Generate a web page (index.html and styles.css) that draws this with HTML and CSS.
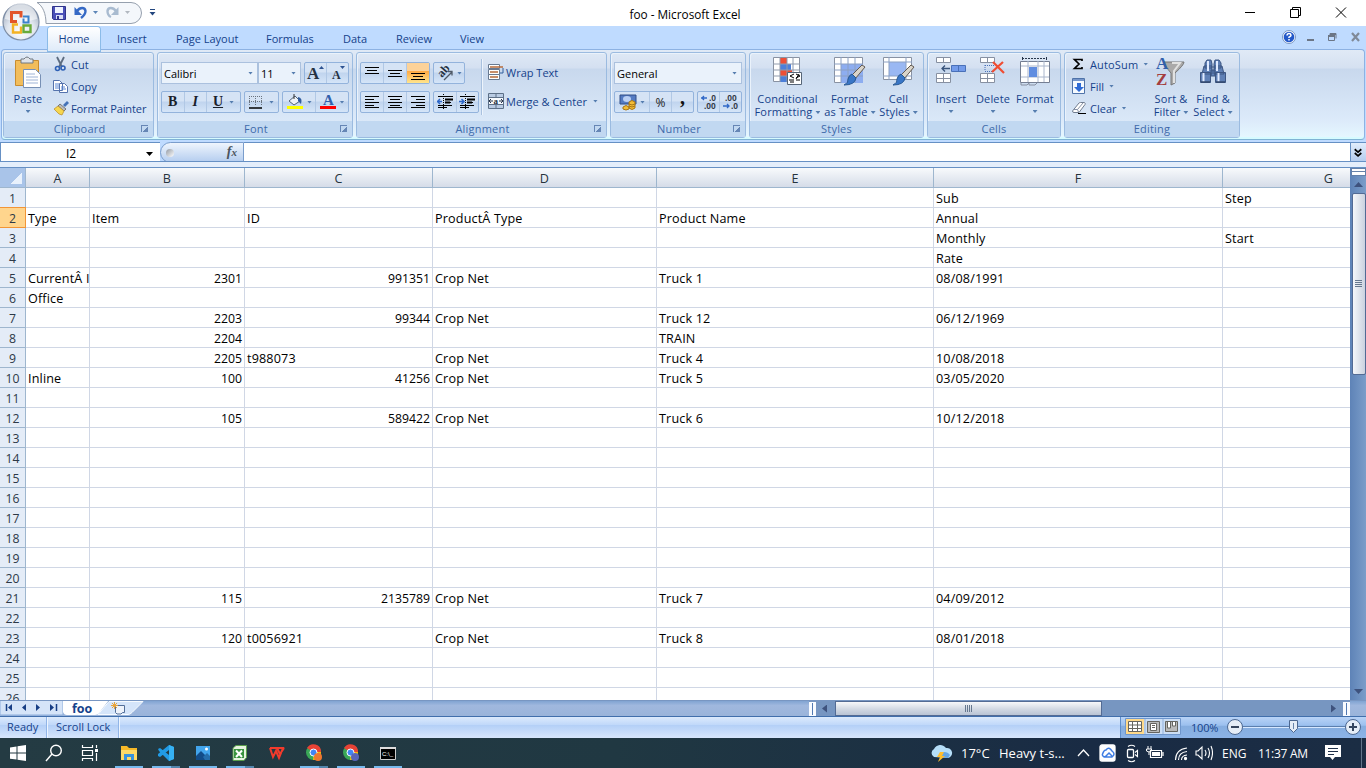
FILE: index.html
```html
<!DOCTYPE html>
<html lang="en">
<head>
<meta charset="utf-8">
<title>foo - Microsoft Excel</title>
<link rel="stylesheet" href="styles.css">
</head>
<body>
<div class="app">
  <header class="titlebar">
    <div class="quick">
      <svg width="160" height="26" viewBox="0 0 160 26">
        <path d="M37 2.500H131a10.500 10.500 0 0 1 0 21H46C46 14 43 6 37 2.500Z" fill="#f4f7fb" stroke="#96a0ae"/>
        <path d="M52.500 6.500h13v13h-12l-1-1z" fill="#4a50b8" stroke="#30348c"/><path d="M55 7h8v6h-8z" fill="#eef3ff"/><path d="M56 15h7v4h-7z" fill="#d9def5"/><path d="M57 16h2v3h-2z" fill="#30348c"/>
        <path d="M77 11c3-4 8-4 8.500 0 0 3-2 5-4.500 7" fill="none" stroke="#3569c5" stroke-width="2.400"/><path d="M74.500 7v8h7.500z" fill="#3569c5"/>
        <path d="M93 11h5l-2.500 3z" fill="#5d86b8"/><path d="M116 11c-3-4-8-4-8.500 0 0 3 1 5 3.500 6" fill="none" stroke="#a9bbd0" stroke-width="2.400"/><path d="M118.500 7v8h-7.500z" fill="#a9bbd0"/><path d="M125 11h5l-2.500 3z" fill="#b2b8c0"/>
        <path d="M150 9.500h5" stroke="#24477f"/><path d="M149.500 12h6l-3 3.500z" fill="#24477f"/>
      </svg>
    </div>
    <div class="title">foo - Microsoft Excel</div>
    <svg class="winctl" width="120" height="26" viewBox="0 0 120 26" fill="none" stroke="#000"><path d="M0 12.500h10M45.500 9.500h8v8h-8zM47.500 9.500v-2h8v8h-2M91 7.500l10 10M101 7.500l-10 10"/></svg>
    <svg class="orb" width="40" height="40" viewBox="0 0 40 40">
      <defs><radialGradient id="orb" cx=".5" cy=".75" r=".65"><stop offset="0" stop-color="#fff"/><stop offset=".6" stop-color="#dfe5ee"/><stop offset="1" stop-color="#aab5c6"/></radialGradient></defs>
      <circle cx="20" cy="20" r="18" fill="url(#orb)" stroke="#7d8da5" stroke-width="1.200"/><path d="M4 17a16 16 0 0 1 32 0q-16 5-32 0" fill="#fff" opacity=".55"/>
      <g fill="none" stroke-width="3"><path d="M16 19.500h-5.500V10.500h9.500v5" stroke="#e2542a"/><path d="M22 14.500h5.500v6h-5v-4" stroke="#3b82cc" stroke-width="2"/><path d="M17 22.500h-5v8h8v-6" stroke="#f4b223" stroke-width="2.400"/><path d="M22.500 23.500h7v6.500h-7z" stroke="#68ab3a" stroke-width="2.400"/></g>
    </svg>
  </header>

  <nav class="tabs">
    <span class="tab on">Home</span><span class="tab t2">Insert</span><span class="tab t3">Page Layout</span><span class="tab t4">Formulas</span><span class="tab t5">Data</span><span class="tab t6">Review</span><span class="tab t7">View</span>
    <svg class="docctl" width="84" height="20" viewBox="0 0 84 20"><circle cx="7" cy="9" r="6.500" fill="#fff" stroke="#7a97c2"/><circle cx="7" cy="9" r="5.300" fill="#2459c9"/><path d="M5 7.500q.2-2 2-2t2 1.700q0 1-2 2V10M7 11v1.500" fill="none" stroke="#fff" stroke-width="1.500"/><path d="M25 12h7" stroke="#6c7686" stroke-width="2"/><path d="M46.500 8.500h6v4h-6zM48 7V5.500h6v5" fill="none" stroke="#6c7686"/><path d="M46 8h7M48 6h6" stroke="#6c7686" stroke-width="2"/><path d="M70 5l7 8M77 5l-7 8" stroke="#808a98" stroke-width="2.200"/></svg>
  </nav>

  <section class="ribbon">
    <div class="group clip">
      <div class="gbody">
        <div class="big paste"><svg width="30" height="32" viewBox="0 0 30 32"><path d="M2.500 4.500h23v25h-23z" fill="#f2bd5b" stroke="#c98d30"/><path d="M8 3h3q3-4 6 0h3v4H8z" fill="#dfe3e8" stroke="#707880"/><path d="M10.500 13.500h12l5 5v13h-17z" fill="#fff" stroke="#7790b5"/><path d="M13 18h9M13 21h12M13 24h12M13 27h12" stroke="#9fb4d6"/></svg><span>Paste</span><i class="dn"></i></div>
        <div class="stack">
          <div class="small"><svg width="16" height="16" viewBox="0 0 16 16" fill="none"><path d="M4 1l5 10M11 1L6 11" stroke="#5c6c80" stroke-width="1.800"/><circle cx="4.500" cy="12.500" r="2" stroke="#2e60b5" stroke-width="1.600"/><circle cx="10" cy="12" r="2" stroke="#2e60b5" stroke-width="1.600"/></svg><span>Cut</span></div>
          <div class="small"><svg width="16" height="16" viewBox="0 0 16 16"><path d="M.5 2.500h6l3 3v7h-9zM6.500 5.500h5l3 3v6h-8z" fill="#fff" stroke="#5573ad"/><path d="M2 6h4M2 8h4M8 9h4M8 11h5M2 10h4" stroke="#5b87d4"/></svg><span>Copy</span></div>
          <div class="small"><svg width="16" height="16" viewBox="0 0 16 16"><path d="M10 5l4-4 2 2-4 4z" fill="#4473b8"/><path d="M7 4l6 5-2 2-6-5z" fill="#bbb" stroke="#555" stroke-width=".7"/><path d="M5 6l6 5-2 4-3-1-5-5z" fill="#f6d64f" stroke="#b88a25" stroke-width=".7"/></svg><span class="fp">Format Painter</span></div>
        </div>
      </div>
      <div class="glabel">Clipboard<i class="launch"></i></div>
    </div>

    <div class="group font">
      <div class="gbody rows">
        <div class="line">
          <div class="combo w97">Calibri<i class="dn"></i></div><div class="combo w43">11<i class="dn"></i></div>
          <div class="btns ml3 w45"><b><svg width="20" height="20" viewBox="0 0 20 20"><text x="1" y="16" class="ser" font-size="17">A</text><path d="M13 6h5l-2.500-3z" fill="#2d5291"/></svg></b><b><svg width="20" height="20" viewBox="0 0 20 20"><text x="4" y="16" class="ser" font-size="12">A</text><path d="M12 3h5l-2.500 3z" fill="#2d5291"/></svg></b></div>
        </div>
        <div class="line">
          <div class="btns w80"><b class="ser bt">B</b><b class="ser bt it">I</b><b class="w34"><u class="ser bt">U</u><i class="dn wide"></i></b></div>
          <div class="btns w35 ml4"><b><svg width="14" height="16" viewBox="0 0 14 16"><path d="M.5 2v10M6.500 2v10M12.500 2v10M0 2.500h13M0 7.500h13" fill="none" stroke="#69737f" stroke-dasharray="1 1"/><path d="M0 14h13" stroke="#000" stroke-width="1.500"/></svg><i class="dn wide"></i></b></div>
          <div class="btns w67 ml3"><b><svg width="18" height="18" viewBox="0 0 18 18"><path d="M3 8l6-5 5 5-6 4z" fill="#eef2f7" stroke="#536477"/><path d="M8 1v5" stroke="#333"/><path d="M12 4q5 1 3 7l-3-3z" fill="#315d9e"/><path d="M1 13h16v3H1z" fill="#ff0"/></svg><i class="dn"></i></b><b><svg width="17" height="18" viewBox="0 0 17 18"><text x="3" y="12" class="ser blue" font-size="15">A</text><path d="M0 13h16v3H0z" fill="#f00"/></svg><i class="dn"></i></b></div>
        </div>
      </div>
      <div class="glabel">Font<i class="launch"></i></div>
    </div>

    <div class="group align">
      <div class="gbody">
        <div class="rows sep">
          <div class="line"><div class="btns w69"><b><svg class="ln" viewBox="0 0 16 16"><path d="M1 2.500h14M3 5.500h10M1 8.500h14"/></svg></b><b><svg class="ln" viewBox="0 0 16 16"><path d="M1 5.500h14M3 8.500h10M1 11.500h14"/></svg></b><b class="hot"><svg class="ln" viewBox="0 0 16 16"><path d="M1 8.500h14M3 11.500h10M1 14.500h14"/></svg></b></div>
          <div class="btns w32 ml3"><b><svg width="18" height="18" viewBox="0 0 18 18"><text x="0" y="0" class="ser" font-size="12" transform="translate(6 14) rotate(-48)">ab</text><path d="M8 16l8-8M12 7.500h4v4" fill="none" stroke="#4e5967" stroke-width="1.300"/></svg><i class="dn"></i></b></div></div>
          <div class="line"><div class="btns w69"><b><svg class="ln" viewBox="0 0 16 16"><path d="M1 2.500h14M1 5.500h9M1 8.500h14M1 11.500h9M1 13.500h14"/></svg></b><b><svg class="ln" viewBox="0 0 16 16"><path d="M1 2.500h14M3 5.500h10M1 8.500h14M3 11.500h10M1 13.500h14"/></svg></b><b><svg class="ln" viewBox="0 0 16 16"><path d="M1 2.500h14M6 5.500h9M1 8.500h14M6 11.500h9M1 13.500h14"/></svg></b></div>
          <div class="btns w46 ml3"><b><svg class="ln" viewBox="0 0 16 16"><path d="M1 2.500h15M8 5.500h8M8 8.500h6M1 11.500h14M1 13.500h9"/><path d="M6.500 0v16" stroke-dasharray="1 1"/><path d="M8 5.500h8M8 8.500h5" stroke-width="2"/><path class="bl" d="M0 7.500h5M3 5L.5 7.500 3 10"/></svg></b><b><svg class="ln" viewBox="0 0 16 16"><path d="M1 2.500h15M8 5.500h8M8 8.500h6M1 11.500h14M1 13.500h9"/><path d="M6.500 0v16" stroke-dasharray="1 1"/><path d="M8 5.500h8M8 8.500h5" stroke-width="2"/><path class="bl" d="M0 7.500h5M2.500 5L5 7.500 2.500 10"/></svg></b></div></div>
        </div>
        <div class="stack wrap">
          <div class="small"><svg width="16" height="16" viewBox="0 0 16 16"><path d="M.5.500h11v4H.5zM.5 5.500h11v5H.5zM.5 10.500h11v5H.5z" fill="#fff" stroke="#687a91"/><path d="M2 3h13M2 8h8M2 13h8" stroke="#b66b3b" stroke-width="1.500"/><path d="M15 4v5h-3" stroke="#315f9e" fill="none"/></svg><span>Wrap Text</span></div>
          <div class="small"><svg width="16" height="16" viewBox="0 0 16 16"><path d="M.5.500h15v15H.5z" fill="#f8fbff" stroke="#5d7088"/><path d="M1 1h14v3H1zM1 12h14v3H1z" fill="#b9cbe3"/><path d="M.5 4.500h15M.5 11.500h15M8 0v4M8 12v4" stroke="#5d7088"/><path d="M1 8h4M11 8h4M3 6L1 8l2 2M13 6l2 2-2 2" fill="none" stroke="#29354a"/><text x="5.500" y="10.500" class="ser" font-size="9">a</text></svg><span class="mc">Merge &amp; Center</span><i class="dn"></i></div>
        </div>
      </div>
      <div class="glabel">Alignment<i class="launch"></i></div>
    </div>

    <div class="group number">
      <div class="gbody rows">
        <div class="line"><div class="combo w128">General<i class="dn"></i></div></div>
        <div class="line"><div class="btns w80"><b class="w34"><svg width="18" height="18" viewBox="0 0 18 18"><path d="M1 2h16v9H1z" fill="#547bc2" stroke="#304f88"/><ellipse cx="8" cy="6" rx="4" ry="3" fill="#b9cff4"/><path d="M10 9q3-3 6 0v6q-3 3-6 0zM4 14q3-3 6 0v2q-3 2-6 0z" fill="#f3bd35" stroke="#a97615"/><path d="M10 11q3 2 6 0m-6 2q3 2 6 0" fill="none" stroke="#a97615"/></svg><i class="dn"></i></b><b class="pct">%</b><b class="ser comma">,</b></div>
        <div class="btns w45 ml3"><b><svg class="dec" viewBox="0 0 18 18"><text x="9" y="8">.0</text><text x="4" y="16">.00</text><path d="M1 5h6M4 3L2 5l2 2"/></svg></b><b><svg class="dec" viewBox="0 0 18 18"><text x="3" y="8">.00</text><text x="9" y="16">.0</text><path d="M1 13h6M5 11l2 2-2 2"/></svg></b></div></div>
      </div>
      <div class="glabel">Number<i class="launch"></i></div>
    </div>

    <div class="group styles">
      <div class="gbody">
        <div class="big b75"><svg width="30" height="30" viewBox="0 0 30 30"><path d="M.5.500h26v24H.5z" fill="#fff" stroke="#8992a2"/><path d="M7 1h7v6H7zM7 13h12v6H7z" fill="#ee4f36"/><path d="M7 7h11v6H7zM7 19h7v6H7z" fill="#4c7fd9"/><path d="M7 0v25M14 0v25M20 0v25M0 7h27M0 13h27M0 19h27" stroke="#909bad"/><path d="M14.500 15.500h14v12h-14z" fill="#fff" stroke="#566577"/><path d="M21 17l-4 2 4 2M16 23h5M23 17l4 2-4 2M23 23h4M17 25h4M26 17l-3 5" fill="none" stroke="#000"/></svg><span>Conditional</span><span>Formatting<i class="dn"></i></span></div>
        <div class="big b50"><svg width="32" height="30" viewBox="0 0 32 30"><path d="M.5.500h28v25H.5z" fill="#fff" stroke="#8992a2"/><path d="M7 7h22v19H7z" fill="#8dadf0"/><path d="M7 0v26M14 0v26M21 0v26M0 7h29M0 13h29M0 19h29" stroke="#8ba0c3"/><path d="M28 8l3 2-10 12-4-3z" fill="#d9d4ca" stroke="#625950"/><path d="M18 17l4 4q-1 7-12 7 5-2 4-6 1-4 4-5" fill="#3976c7" stroke="#265893"/></svg><span>Format</span><span>as Table<i class="dn"></i></span></div>
        <div class="big b46"><svg width="32" height="30" viewBox="0 0 32 30"><path d="M.5.500h28v22H.5z" fill="#fff" stroke="#8992a2"/><path d="M6 5h17v14H6z" fill="#9ab8f3"/><path d="M6 0v23M23 0v23M0 5h29M0 19h29" stroke="#8ba0c3"/><path d="M28 8l3 2-10 12-4-3z" fill="#d9d4ca" stroke="#625950"/><path d="M18 17l4 4q-1 7-12 7 5-2 4-6 1-4 4-5" fill="#3976c7" stroke="#265893"/></svg><span>Cell</span><span>Styles<i class="dn"></i></span></div>
      </div>
      <div class="glabel nol">Styles</div>
    </div>

    <div class="group cells">
      <div class="gbody">
        <div class="big b42"><svg width="30" height="30" viewBox="0 0 30 30"><path d="M.5.500h14v5H.5zM7.500 0v6M.5 16.500h14v9H.5zM7.500 16v10M0 21.500h15" fill="#fff" stroke="#8790a1"/><path d="M15.500 8.500h14v6h-14z" fill="#739bea" stroke="#4970b8"/><path d="M22.500 9v5" stroke="#4970b8"/><path d="M6 11.500h8M9 8.500l-3 3 3 3" fill="none" stroke="#39547b" stroke-width="1.300"/></svg><span>Insert</span><i class="dn"></i></div>
        <div class="big b42"><svg width="26" height="30" viewBox="0 0 26 30"><path d="M.5.500h14v5H.5zM7.500 0v6M.5 16.500h14v9H.5zM7.500 16v10M0 21.500h15" fill="#fff" stroke="#8790a1"/><path d="M5 8.500h10M5 14.500h10M5 8v6" stroke="#4970b8" stroke-dasharray="1 1"/><path d="M13 5l11 11M23 5L12 15" stroke="#f04d32" stroke-width="2.200"/></svg><span>Delete</span><i class="dn"></i></div>
        <div class="big b42"><svg width="32" height="30" viewBox="0 0 32 30"><path d="M3 1.500h24" stroke="#27364a" stroke-dasharray="2 1"/><path d="M3.500 0v3M27.500 0v3" stroke="#27364a"/><path d="M1.500 4.500h29v21h-29z" fill="#fff" stroke="#747e92"/><path d="M9 4v21M19 4v21M25 4v21M2 9h28M2 20h28" stroke="#aab6cc"/><path d="M10 10h8v10h-8z" fill="#608de0"/><path d="M2 26v2h6l2-2v2h6l2-2" fill="none" stroke="#8790a1"/></svg><span>Format</span><i class="dn"></i></div>
      </div>
      <div class="glabel nol">Cells</div>
    </div>

    <div class="group editing">
      <div class="gbody">
        <div class="stack">
          <div class="small"><svg width="16" height="16" viewBox="0 0 16 16"><path d="M11 5V3.500H3.500L8 8l-4.500 4.500H11V11" fill="none" stroke="#000" stroke-width="1.700"/></svg><span class="as">AutoSum</span><i class="dn"></i></div>
          <div class="small"><svg width="16" height="16" viewBox="0 0 16 16"><path d="M1.500.500h12v15h-12z" fill="#f7fbff" stroke="#4f73a9"/><path d="M2 1h11v2H2z" fill="#7696ca"/><path d="M6 5h4v4h3l-5 5-5-5h3z" fill="#2f6bd5"/></svg><span>Fill</span><i class="dn"></i></div>
          <div class="small"><svg width="16" height="16" viewBox="0 0 16 16"><path d="M1.500 11L8 3q.5-.500 1.500-.500h4q1 .500.500 2L8 12.500H3q-1.500 0-1.500-1.500z" fill="#fff" stroke="#717d90"/><path d="M2 9.500h4.500l1 2.500M6.500 9.500L12 3" fill="none" stroke="#8894a8"/><path d="M7 13.500h8" stroke="#000"/></svg><span>Clear</span><i class="dn"></i></div>
        </div>
        <div class="big b42"><svg width="32" height="30" viewBox="0 0 32 30"><path d="M9 5h20q0 3-9 11v10l-4 2V16Q9 8 9 5z" fill="#aaa9a9" stroke="#777"/><path d="M17 6h8l-6 8v12" fill="none" stroke="#e1e1e1" stroke-width="2"/><text x="1" y="12" class="ser blue" font-size="17" aria-label="A">A</text><text x="1" y="28" class="ser red" font-size="17">Z</text></svg><span>Sort &amp;</span><span>Filter<i class="dn"></i></span></div>
        <div class="big b42"><svg width="28" height="30" viewBox="0 0 28 30"><g fill="#5f80b6" stroke="#3d5683"><path d="M8 3h4l1 4v4H6V6zM16 3h4l2 3v5h-7V7zM5 9h8v8H3zM15 9h8l2 8H15zM1.500 15.500h10v10h-10zM16.500 15.500h10v10h-10zM12 13h4v6h-4z"/></g><path d="M4.500 16v9M19.500 16v9M9 4v10M18 4v10" stroke="#dfeaff" stroke-width="2"/><path d="M2 25h9M17 25h9" stroke="#33486e" stroke-width="1.500"/></svg><span>Find &amp;</span><span>Select<i class="dn"></i></span></div>
      </div>
      <div class="glabel nol">Editing</div>
    </div>
  </section>

  <div class="formula"><div class="namebox">I2<i></i></div><div class="fx"><em></em><span>f<small>x</small></span></div><div class="entry"></div><svg class="expand" width="16" height="20" viewBox="0 0 16 20"><path d="M4 6l3.500 3L11 6M4 10l3.500 3L11 10" fill="none" stroke="#000" stroke-width="1.800"/></svg></div>

  <main class="work">
    <div class="sheet">
      <div class="row heads"><b></b><span>A</span><span>B</span><span>C</span><span>D</span><span>E</span><span>F</span><span class="gh">G</span></div>
      <div class="row"><b>1</b><span class="cf">Sub</span><span class="cg">Step</span></div>
      <div class="row"><b class="sel">2</b><span class="ca">Type</span><span class="cb">Item</span><span class="cc">ID</span><span class="cd">ProductÂ Type</span><span class="ce">Product Name</span><span class="cf">Annual</span></div>
      <div class="row"><b>3</b><span class="cf">Monthly</span><span class="cg">Start</span></div>
      <div class="row"><b>4</b><span class="cf">Rate</span></div>
      <div class="row"><b>5</b><span class="ca">CurrentÂ I</span><span class="cb n">2301</span><span class="cc n">991351</span><span class="cd">Crop Net</span><span class="ce">Truck 1</span><span class="cf">08/08/1991</span></div>
      <div class="row"><b>6</b><span class="ca">Office</span></div>
      <div class="row"><b>7</b><span class="cb n">2203</span><span class="cc n">99344</span><span class="cd">Crop Net</span><span class="ce">Truck 12</span><span class="cf">06/12/1969</span></div>
      <div class="row"><b>8</b><span class="cb n">2204</span><span class="ce">TRAIN</span></div>
      <div class="row"><b>9</b><span class="cb n">2205</span><span class="cc">t988073</span><span class="cd">Crop Net</span><span class="ce">Truck 4</span><span class="cf">10/08/2018</span></div>
      <div class="row"><b>10</b><span class="ca">Inline</span><span class="cb n">100</span><span class="cc n">41256</span><span class="cd">Crop Net</span><span class="ce">Truck 5</span><span class="cf">03/05/2020</span></div>
      <div class="row"><b>11</b></div>
      <div class="row"><b>12</b><span class="cb n">105</span><span class="cc n">589422</span><span class="cd">Crop Net</span><span class="ce">Truck 6</span><span class="cf">10/12/2018</span></div>
      <div class="row"><b>13</b></div><div class="row"><b>14</b></div><div class="row"><b>15</b></div><div class="row"><b>16</b></div><div class="row"><b>17</b></div><div class="row"><b>18</b></div><div class="row"><b>19</b></div><div class="row"><b>20</b></div>
      <div class="row"><b>21</b><span class="cb n">115</span><span class="cc n">2135789</span><span class="cd">Crop Net</span><span class="ce">Truck 7</span><span class="cf">04/09/2012</span></div>
      <div class="row"><b>22</b></div>
      <div class="row"><b>23</b><span class="cb n">120</span><span class="cc">t0056921</span><span class="cd">Crop Net</span><span class="ce">Truck 8</span><span class="cf">08/01/2018</span></div>
      <div class="row"><b>24</b></div><div class="row"><b>25</b></div><div class="row"><b>26</b></div>
    </div>
    <div class="vscroll"><div class="split"></div><i class="up"></i><div class="vthumb"></div><i class="down"></i></div>
  </main>

  <div class="sheetbar">
    <svg width="150" height="16" viewBox="0 1 150 16"><path d="M0 0h63v15H0z" fill="#d5e4f8" stroke="#8daedb"/><path d="M6.500 4v7M56.500 4v7" stroke="#173e85" stroke-width="1.500"/><path d="M12 4v7L8 7.500zM26 4v7l-4-3.500zM36 4v7l4-3.500zM50 4v7l4-3.500z" fill="#173e85"/><path d="M63 0h46L99 13q-1 2-4 2H67q-3 0-4-3z" fill="#fff"/><path d="M109 1.500h34l-11 11q-2 2-4 2H98z" fill="#d5e5fa" stroke="#f7fbff"/><path d="M115.500 5.500h9v7h-2l-1.500 1.500h-4l-1.500-1.500z" fill="#eef3fb" stroke="#536f99"/><path d="M114.500 2v7M111 5.500h7M112 3l5 5M117 3l-5 5" stroke="#e9a439"/><text x="72" y="13" class="sheetname">foo</text></svg>
    <div class="hscroll"><i class="hs"></i><i class="lf"></i><div class="hthumb"></div><i class="rt"></i><i class="hs"></i></div>
  </div>

  <div class="status">
    <span class="st s1">Ready</span><span class="st s2">Scroll Lock</span>
    <div class="zoom"><svg width="245" height="21" viewBox="0 0 245 21"><path d="M4.500 1.500h55v16h-55z" fill="#ccdef5" stroke="#6f96cc"/><path d="M5 2h18v15H5z" fill="#ffd98a"/><path d="M24 2v15M42 2v15" stroke="#93b1da"/><g fill="#fff" stroke="#65645f"><path d="M7.500 4.500h13v10h-13zM7 8h14M7 11.500h14M11.500 4v11M16.500 4v11"/><path d="M26.500 4.500h12v11h-12z" fill="#b9b9b9"/><path d="M29.500 6.500h6v7h-6zM31 8.500h3M31 10.500h3"/><path d="M44.500 4.500h12v10h-12z" fill="#b9b9b9"/><path d="M46.500 5v6h3V5M51.500 5v4h3V5"/></g><text x="70" y="15" class="ui" font-size="11">100%</text><path d="M122 9.500h102" stroke="#5b7fae"/><path d="M122 10.500h102" stroke="#d7e8ff"/><g fill="#e5edf7" stroke="#4b6791"><circle cx="114" cy="10" r="7.500"/><circle cx="232" cy="10" r="7.500"/><path d="M168.500 3.500h8v8l-4 4-4-4z"/></g><path d="M110 10h8M228 10h8M232 6v8" stroke="#36465e" stroke-width="2"/><path d="M172.500 6v6" stroke="#6784aa"/></svg></div>
  </div>

  <footer class="taskbar">
    <div class="ti"><svg width="18" height="18" viewBox="0 0 18 18"><path d="M1 3.500l6.500-1v6H1zM8.500 2.300L17 1v7.500H8.500zM1 9.500h6.500v6L1 14.700zM8.500 9.500H17V17l-8.500-1.300z" fill="#fff"/></svg></div>
    <div class="ti"><svg width="18" height="18" viewBox="0 0 18 18" fill="none" stroke="#fff" stroke-width="1.400"><circle cx="11" cy="6.500" r="5.300"/><path d="M7 10l-6 7"/></svg></div>
    <div class="ti"><svg width="18" height="18" viewBox="0 0 18 18" fill="none" stroke="#fff" stroke-width="1.200"><path d="M1.500 1v2.500h10V1M1.500 6.500h10v5h-10zM1.500 17v-2.500h10V17M15.500 1v3M15.500 9v8"/><path d="M14 6.500h3" stroke-width="3"/></svg></div>
    <div class="ti run"><svg width="18" height="18" viewBox="0 0 18 18"><path d="M1 2h6l2 2h8v11H1z" fill="#f7b928"/><path d="M1 6h16v10H1z" fill="#ffda67"/><path d="M4 10h10v6h-3v-3H7v3H4z" fill="#3893dd"/></svg></div>
    <div class="ti run multi"><svg width="18" height="18" viewBox="0 0 18 18"><path d="M12 1l5 2v12l-5 2L2 7l-1-2 2-1 9 7V6l-9 7-2-1V10z" fill="#219be5"/><path d="M12 1l5 2v12l-5 2z" fill="#36b1f3"/></svg></div>
    <div class="ti run"><svg width="18" height="18" viewBox="0 0 18 18"><path d="M2 2h14v14H2z" fill="#42a5ed"/><path d="M2 12l5-5 9 9H2z" fill="#124c88"/><path d="M9 13l4-4 3 3v4h-5z" fill="#246dab"/><circle cx="12.500" cy="5" r="1.500" fill="#fff"/></svg></div>
    <div class="ti run multi"><svg width="18" height="18" viewBox="0 0 18 18"><path d="M5 1.500h10.500v12L13 16.500H2V4z" fill="#e6f3df" stroke="#5a9e4c"/><path d="M3 5h10v9H3z" fill="#38933e"/><path d="M5 6.500l6 6.500M11 6.500L5 13" stroke="#fff" stroke-width="2"/></svg></div>
    <div class="ti"><svg width="18" height="18" viewBox="0 0 18 18" fill="none" stroke="#f33b2c" stroke-width="2"><path d="M2 4h13l-4 10-3-7-3 6-3-9M9 4l3 6 4-6"/></svg></div>
    <div class="ti run multi"><svg width="18" height="18" viewBox="0 0 18 18"><circle cx="8.500" cy="8.500" r="7.500" fill="#3aa757"/><path d="M2 4a7.500 7.500 0 0 1 14 4H8z" fill="#e94235"/><path d="M9 8h7a7.500 7.500 0 0 1-8 8z" fill="#fbbc05"/><circle cx="8.500" cy="8.500" r="3.500" fill="#4285f4" stroke="#fff"/><circle cx="13" cy="13" r="4" fill="#ee782f"/></svg></div>
    <div class="ti run"><svg width="18" height="18" viewBox="0 0 18 18"><circle cx="8.500" cy="8.500" r="7.500" fill="#3aa757"/><path d="M2 4a7.500 7.500 0 0 1 14 4H8z" fill="#e94235"/><path d="M9 8h7a7.500 7.500 0 0 1-8 8z" fill="#fbbc05"/><circle cx="8.500" cy="8.500" r="3.500" fill="#4285f4" stroke="#fff"/><circle cx="13" cy="13" r="4" fill="#5965b9"/></svg></div>
    <div class="ti run"><svg width="18" height="18" viewBox="0 0 18 18"><path d="M1.500 3.500h15v12h-15z" fill="#000" stroke="#ccc"/><path d="M1 4h16" stroke="#ddd" stroke-width="2"/><text x="3" y="12" font-size="6" fill="#fff" font-family="Liberation Sans,sans-serif">C:\_</text></svg></div>
    <div class="tray">
      <svg class="weather" width="24" height="20" viewBox="0 0 24 20"><path d="M5 14a4.500 4.500 0 0 1 0-8 7 7 0 0 1 12-1 5 5 0 0 1 2 10z" fill="#b5def8"/><path d="M9 14q2-5 6-5t6 3l-2 3z" fill="#63a5e5"/><path d="M11 9h4l-2 4h3l-7 6 2-5H8z" fill="#ffbd2d"/></svg>
      <span class="temp">17°C</span><span class="cond">Heavy t-s...</span>
      <svg width="146" height="20" viewBox="0 0 146 20" fill="none" stroke="#fff" stroke-width="1.300"><path d="M11 13l5.500-6 5.500 6"/><rect x="33" y="2" width="15" height="16" rx="2" fill="#fff"/><path d="M38 14q-4-1-2-4 1-3 3-3 3-4 6 1 4 3 0 6h-7l4-4 3 3" stroke="#3f7de3" stroke-width="1.500"/><rect x="60.500" y="6.500" width="6" height="8" rx="1"/><path d="M68 9.500l2.500-2v6l-2.500-2M61 3.500q3.500-2.500 7 0M61 17.500q3.500 2.500 7 0" stroke-width="1.100"/><path d="M83.500 7.500h11v7h-11zM96 9v4" stroke-width="1.200"/><path d="M85 9h8v4h-8z" fill="#fff" stroke="none"/><path d="M81 3v3M84 3v3M79.500 6h5v2q-2.500 2-5 0zM82 9v3" stroke-width="1"/><path d="M108.500 17Q108.500 6.500 120 5M111.500 17q0-7.500 8.500-8.500M114.500 17q0-4.500 5.500-5" stroke-width="1.100"/><circle cx="118.500" cy="15.500" r="1" fill="#fff"/><path d="M129 8h2l4-4v12l-4-4h-2zM138 7q2 3 0 6M141 5q3 5 0 10M144 3q3 7 0 14" stroke-width="1.100"/></svg>
      <span class="lang">ENG</span><span class="time">11:37 AM</span>
      <svg width="18" height="18" viewBox="0 0 18 18"><path d="M1 1h16v12h-6l-2.500 3-2.500-3H1z" fill="#fff"/><path d="M4 4.500h10M4 7.500h10M4 10.500h6" stroke="#20314a"/></svg>
      <i class="peek"></i>
    </div>
  </footer>
</div>
</body>
</html>
```
FILE: styles.css
```css
* { box-sizing: border-box; }
body { margin: 0; overflow: hidden; font-family: "Open Sans", "Noto Sans", sans-serif; font-size: 11px; color: #15428b; }
svg { display: block; flex: none; }
i { font-style: normal; }
.app { width: 1366px; height: 768px; display: flex; flex-direction: column; background: #bfdbff; }
.app > * { flex: none; }
.titlebar { height: 26px; background: #fff; display: flex; position: relative; z-index: 2; }
.quick { width: 160px; }
.title { flex: 1; width: 0; text-align: center; padding: 6px 35px 0 0; line-height: 16px; font-size: 11.800px; color: #000; margin-right: -118px; }
.winctl { margin-left: 119px; width: 120px; position: relative; left: -1px; }
.orb { position: absolute; left: 1px; top: 2px; }
.tabs { height: 23px; display: flex; position: relative; z-index: 1; }
.tab { padding-top: 4px; line-height: 17px; font-size: 11px; }
.tab.on { margin-left: 48px; width: 52px; height: 24px; margin-top: 1px; padding-top: 3px; text-align: center; border-radius: 3px 3px 0 0; background: linear-gradient(#fff, #dfebf9); box-shadow: 0 0 0 1px #8bbbe8; }
.t2 { margin-left: 17px; width: 59px; }
.t3 { width: 90px; }
.t4 { width: 77px; }
.t5 { width: 53px; }
.t6 { width: 64px; }
.docctl { margin: 2px 0 0 auto; width: 84px; }
.ribbon { height: 91px; margin: 0 1px; display: flex; gap: 3px; padding: 2px 2px 0 1px; border: 1px solid #8db2e3; border-bottom-color: #7fb3d4; border-radius: 4px; background: linear-gradient(#e0eaf6 0, #d5e1f1 18px, #c8d8ed 19px, #dceafa 70px, #e6f8ff 100%); box-shadow: inset 0 -2px #d6fbff; }
.group { height: 86px; border: 1px solid #9bbbe0; border-radius: 3px; display: flex; flex-direction: column; background: linear-gradient(#dee8f5, #d4e0f1 15px, #c8d8ed 16px, #dae8f8 68px); box-shadow: inset 1px 1px #eaf2fb; }
.gbody { height: 68px; display: flex; padding-top: 2px; }
.glabel { height: 16px; line-height: 15px; background: #c1d8f1; text-align: center; color: #3e6aaa; display: flex; justify-content: center; padding-left: 14px; letter-spacing: .2px; }
.glabel.nol { padding: 0; }
.launch { width: 7px; height: 7px; border-left: 1px solid #6686b5; border-top: 1px solid #6686b5; margin: 4px 5px 0 auto; background: linear-gradient(135deg, transparent 55%, #6686b5 55%); }
.glabel:not(.nol)::before { content: ""; margin-right: auto; }
.clip { width: 151px; } .font { width: 196px; } .align { width: 251px; } .number { width: 136px; } .styles { width: 175px; } .cells { width: 134px; } .editing { width: 176px; }
.dn { flex: none; display: inline-block; width: 5px; height: 3px; background: #557daf; clip-path: polygon(0 0, 100% 0, 50% 100%); margin-left: 3px; vertical-align: 2px; }
.dn.wide { margin-left: 6px; }
.big { display: flex; flex-direction: column; align-items: center; padding-top: 2px; white-space: nowrap; letter-spacing: .15px; }
.big svg { height: 30px; }
.big span { line-height: 13px; height: 13px; margin-top: 5px; }
.big span + span { margin-top: 0; }
.big > .dn { margin: 5px 0 0; }
.paste { width: 48px; }
.paste svg { height: 32px; margin-top: -1px; }
.paste span { margin-top: 4px; }
.stack { display: flex; flex-direction: column; margin-top: -2px; }
.small { height: 22px; display: flex; align-items: center; gap: 2px; white-space: nowrap; padding-left: 1px; }
.fp { letter-spacing: -.1px; }
.as { letter-spacing: .15px; }
.rows { flex-direction: column; padding: 9px 0 0 3px; gap: 7px; }
.line { display: flex; height: 22px; }
.combo { height: 22px; border: 1px solid #abc1de; background: #eaf2fb; color: #000; display: flex; align-items: center; padding: 0 4px 0 2px; }
.combo .dn { margin-left: auto; }
.w97 { width: 97px; } .w43 { width: 43px; } .w45 { width: 45px; } .w80 { width: 80px; } .w35 { width: 35px; } .w67 { width: 67px; } .w69 { width: 70px; } .w32 { width: 32px; } .w46 { width: 46px; } .w128 { width: 128px; }
.ml3 { margin-left: 3px; } .ml4 { margin-left: 3px; }
.btns { height: 22px; display: flex; border: 1px solid #93b3dc; border-radius: 2px; background: linear-gradient(#d5e3f5 45%, #c0d4ee 50%, #d5e5f8); }
.btns b { flex: 1; display: flex; align-items: center; justify-content: center; font-weight: 400; }
.btns b + b { border-left: 1px solid #b1c8e5; }
.btns .w34 { flex: none; width: 34px; }
.btns .hot { background: linear-gradient(#fcd299 40%, #ffab45 42%, #ffe58d); }
.ser { font-family: "Liberation Serif", serif; font-weight: 700; fill: #263242; }
.blue { fill: #315fac; } .red { fill: #a43e40; }
.btns .bt { color: #18202b; font-size: 14px; font-weight: 700; }
.btns .it { font-style: italic; }
.btns .pct { color: #222; font-size: 12px; } .btns .comma { font-size: 20px; color: #111; font-weight: 700; padding-bottom: 9px; }
.ln { width: 16px; height: 16px; fill: none; stroke: #000; stroke-width: 1; }
.bl { stroke: #2d67c9; stroke-width: 1.500; }
.dec { width: 18px; height: 18px; font: 700 8.500px "Liberation Sans", sans-serif; fill: #303844; }
.dec path { fill: none; stroke: #3169c7; stroke-width: 1.300; }
.sep { display: flex; width: 125px; }
.align .gbody { padding-top: 0; }
.wrap { gap: 7px; padding: 2px 0 0 5px; border-left: 1px solid #a9c1df; box-shadow: inset 1px 0 #edf4fc; margin: 6px 0 6px -1px; }
.wrap .small { gap: 2px; }
.wrap .dn { margin-left: 4px; }
.b75 { width: 75px; } .b50 { width: 50px; } .b46 { width: 47px; } .b42 { width: 42px; }
.cells .gbody { padding-left: 2px; }
.editing .stack { width: 85px; padding-left: 5px; }
.editing .small svg + span { margin-left: 1px; }
.formula { height: 28px; padding-top: 2px; display: flex; position: relative; }
.formula::after { content: ""; position: absolute; left: 0; right: 0; bottom: 0; height: 5px; border-top: 1px solid #6690c4; border-bottom: 1px solid #6690c4; background: #e4eefb; }
.formula > * { height: 21px; border-top: 1px solid #6690c4; }
.namebox { width: 160px; background: #fff; color: #000; font-size: 12px; padding-right: 19px; line-height: 21px; border-left: 1px solid #6690c4; display: flex; justify-content: center; position: relative; }
.namebox i { position: absolute; right: 7px; top: 9px; width: 7px; height: 4px; background: #000; clip-path: polygon(0 0, 100% 0, 50% 100%); }
.fx { width: 84px; border-radius: 11px 0 0 11px; border: 1px solid #7a9dcc; background: linear-gradient(#eff5fd, #b4cdef); display: flex; }
.fx em { width: 8px; height: 8px; border-radius: 50%; background: linear-gradient(135deg, #9299a3, #fff); margin: 6px 0 0 5px; }
.fx span { margin-left: auto; padding-right: 6px; font: italic 700 14px/18px "Liberation Serif", serif; color: #4b545f; }
.fx small { font-size: 11px; }
.entry { flex: 1; background: #fff; }
.expand { background: linear-gradient(#e1edfc, #afc9ed); border-left: 1px solid #6690c4; }
.work { height: 532px; display: flex; overflow: hidden; }
.sheet { width: 1350px; height: 532px; overflow: hidden; background: linear-gradient(90deg, transparent 89px, #d0d7e5 89px 90px, transparent 90px 244px, #d0d7e5 244px 245px, transparent 245px 432px, #d0d7e5 432px 433px, transparent 433px 656px, #d0d7e5 656px 657px, transparent 657px 933px, #d0d7e5 933px 934px, transparent 934px 1222px, #d0d7e5 1222px 1223px, transparent 1223px) #fff; }
.row { height: 20px; display: grid; grid-template-columns: 26px 64px 155px 188px 224px 277px 289px 1fr; border-bottom: 1px solid #d0d7e5; font-size: 12.250px; line-height: 21px; color: #000; }
.row b { grid-column: 1; grid-row: 1; height: 20px; font-weight: 400; color: #2d3947; background: #e4ecf7; text-align: center; border-right: 1px solid #9eb6ce; border-bottom: 1px solid #9eb6ce; }
.row .sel { background: #ffd58d; border-color: #f29536; box-shadow: 0 -1px #f29536; position: relative; }
.row span { grid-row: 1; padding: 0 2px; overflow: hidden; white-space: nowrap; height: 19px; font-size: 12.600px; letter-spacing: .16px; }
.row .n { text-align: right; font-size: 12.250px; letter-spacing: 0; padding-right: 3px; }
.row .ca { padding-right: 0; margin-right: 1px; }
.ca { grid-column: 2; } .cb { grid-column: 3; } .cc { grid-column: 4; } .cd { grid-column: 5; } .ce { grid-column: 6; } .cf { grid-column: 7; } .cg { grid-column: 8; }
.heads { background: linear-gradient(#f8fafc, #d5dce8); border-color: #9eb6ce; }
.heads span { text-align: center; border-right: 1px solid #9eb6ce; color: #26333d; height: 20px; }
.heads .gh { text-align: right; padding-right: 17px; border: 0; }
.heads b { background: linear-gradient(135deg, transparent 50%, #e8f1fc 50%) 10px 4px / 12px 12px no-repeat #a9c4e9; }
.vscroll { width: 16px; padding-left: 1px; background: linear-gradient(90deg, #5e83b7, #7b9dc9); display: flex; flex-direction: column; align-items: center; }
.split { width: 15px; height: 8px; border: 1px solid #6380aa; background: linear-gradient(#fff 2px, #6782a9 2px 3px, #fff 3px); }
.up, .down { width: 9px; height: 5px; background: #3e527d; clip-path: polygon(50% 0, 100% 100%, 0 100%); margin: 6px 0; }
.down { clip-path: polygon(0 0, 100% 0, 50% 100%); margin: auto 0 6px; }
.vthumb { width: 14px; height: 182px; border: 1px solid #536b94; border-radius: 2px; background: linear-gradient(90deg, #f5f7fa, #cbd2df); display: flex; align-items: center; justify-content: center; }
.vthumb::after { content: ""; width: 7px; height: 8px; background: repeating-linear-gradient(#66788f 0 1px, transparent 1px 2px); }
.sheetbar { height: 17px; display: flex; background: linear-gradient(#81a4d2, #a0b8de 30%, #9ab4da); border-top: 1px solid #7896c2; border-bottom: 1px solid #416fac; }
.sheetname { font: 700 12.500px "Open Sans", sans-serif; fill: #15428b; }
.hscroll { width: 541px; margin: 0 16px 0 auto; display: flex; align-items: center; background: #7796c1; }
.hs { width: 7px; height: 14px; border: 2px solid #f8fbff; background: #5279b2; border-width: 1px 3px; }
.lf, .rt { width: 5px; height: 8px; background: #3e527d; clip-path: polygon(0 50%, 100% 0, 100% 100%); margin: 0 8px 0 6px; }
.rt { clip-path: polygon(0 0, 100% 50%, 0 100%); margin: 0 7px 0 auto; }
.hthumb { width: 267px; height: 15px; background: linear-gradient(#f7f8fa, #d1d8e3 55%, #b9c4d4); border: 1px solid #536b94; display: flex; align-items: center; justify-content: center; }
.hthumb::after { content: ""; width: 8px; height: 7px; background: repeating-linear-gradient(90deg, #66788f 0 1px, transparent 1px 2px); }
.status { height: 21px; display: flex; background: linear-gradient(#dceafc, #c1d9fa 36%, #b4d0f7 40%, #d7e6fc); }
.st { line-height: 20px; border-right: 1px solid #91b5e7; box-shadow: 1px 0 #edf5ff; padding-left: 7px; }
.s1 { width: 47px; } .s2 { width: 72px; padding-left: 9px; }
.zoom { width: 246px; margin-left: auto; border-left: 1px solid #5f8ecb; background: linear-gradient(#b9d3f6, #9bc0ef 40%, #85addf 42%, #8cb3e7); }
.ui { fill: #15428b; letter-spacing: -.2px; }
.taskbar { height: 30px; display: flex; background: linear-gradient(90deg, #243b43, #203842 45%, #192b44 80%, #1b2d44); color: #fff; }
.ti { width: 36px; height: 30px; display: flex; align-items: center; justify-content: center; }
.ti:nth-child(n+4) { width: 37px; }
.ti:nth-child(4) { margin-left: 2px; }
.run { background: linear-gradient(#76b9ed, #76b9ed) 5px 28px / 28px 2px no-repeat; }
.multi { background: linear-gradient(90deg, #76b9ed 19px, #5386ad 19px) 5px 28px / 28px 2px no-repeat; }
.tray { margin-left: auto; width: 438px; display: flex; align-items: center; font-size: 12px; white-space: nowrap; }
.weather { margin-left: 1px; }
.temp { margin-left: 8px; width: 38px; font-size: 13px; } .cond { width: 68px; font-size: 13px; }
.lang { margin-left: 9px; width: 36px; } .time { width: 66px; letter-spacing: -.3px; }
.peek { width: 1px; height: 30px; background: #61758a; margin-left: 19px; }
```
